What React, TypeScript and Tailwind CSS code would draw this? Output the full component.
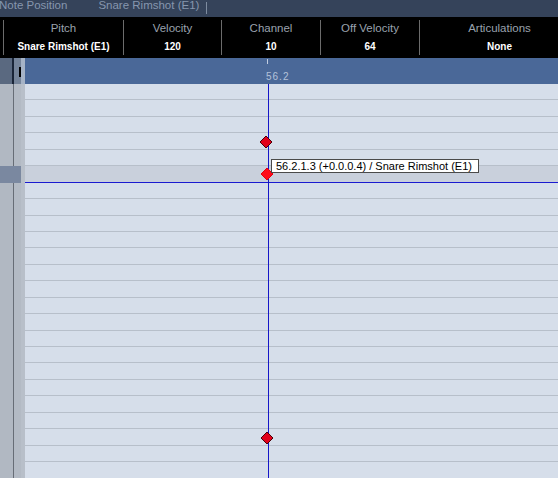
const FONT = { fontFamily: '"Liberation Sans", Arial, sans-serif' };

const COLUMNS = [
  { label: 'Pitch', value: 'Snare Rimshot (E1)', width: 'w-[120px]' },
  { label: 'Velocity', value: '120', width: 'w-[98px]' },
  { label: 'Channel', value: '10', width: 'w-[99px]' },
  { label: 'Off Velocity', value: '64', width: 'w-[99px]' },
  { label: 'Articulations', value: 'None', width: 'w-[160px]' },
];

const ROW_COUNT = 24;
const SELECTED_ROW = 5;

function Diamond({ x, y, selected }: { x: number; y: number; selected?: boolean }) {
  return (
    <svg
      width="14"
      height="14"
      viewBox="0 0 14 14"
      className="absolute"
      style={{ left: x - 7, top: y - 7 }}
    >
      <polygon
        points="7,1 13,7 7,13 1,7"
        fill={selected ? '#ff0a1a' : '#e2001a'}
        stroke={selected ? '#e00010' : '#4a0008'}
        strokeWidth="1"
      />
    </svg>
  );
}

export default function App() {
  return (
    <div className="relative w-[558px] h-[478px] overflow-hidden bg-[#d6deea]" style={FONT}>
      {/* info line */}
      <div className="h-[17px] bg-[#35435a] flex items-start text-[11.5px] leading-none text-[#8696ae]">
        <span className="ml-[-1px] mt-[-0.5px]">Note Position</span>
        <span className="ml-[31px] mt-[-0.5px]">Snare Rimshot (E1)</span>
        <span className="ml-[7px] mt-[2px] w-px h-[12px] bg-[#7e8ca0]" />
      </div>

      {/* note info bar */}
      <div className="h-[41px] bg-black flex items-start pl-[3px] pt-[3px]">
        {COLUMNS.map((c) => (
          <div
            key={c.label}
            className={`${c.width} shrink-0 h-[35px] border-l border-[#6c6c6c] flex flex-col items-center pt-px`}
          >
            <span className="text-[11.5px] leading-[14px] text-[#9aa2ae]">{c.label}</span>
            <span className="mt-[6px] text-[10px] leading-[12px] font-bold text-white">{c.value}</span>
          </div>
        ))}
      </div>

      {/* ruler */}
      <div className="h-[26px] flex">
        <div className="w-[12px] bg-[#5a6980]" />
        <div className="w-[2px] bg-[#1a2538]" />
        <div className="w-[5px] bg-[#75849a]" />
        <div className="w-[2px] bg-[#75849a] flex items-start">
          <div className="mt-[9px] w-[2px] h-[10px] bg-black" />
        </div>
        <div className="w-[4px] bg-[#a6b3c6]" />
        <div className="relative flex-1 bg-[#4a6898]">
          <div className="absolute left-[242px] top-[1px] w-px h-[5px] bg-[#c2cde0]" />
          <span className="absolute left-[241px] top-[14px] text-[10px] leading-none tracking-[1px] text-[#b4c2da]">
            56.2
          </span>
        </div>
      </div>

      {/* note grid */}
      <div className="flex flex-col">
        {Array.from({ length: ROW_COUNT }).map((_, i) => {
          const selected = i === SELECTED_ROW;
          return (
            <div key={i} className="h-[16.45px] shrink-0 flex">
              {selected ? (
                <div className="w-[21px] bg-[#7a88a0]" />
              ) : (
                <>
                  <div className="w-[13px] bg-[#b1b8c2]" />
                  <div className="w-px bg-[#676d76]" />
                  <div className="w-[7px] bg-[#b3bac4]" />
                </>
              )}
              <div className="w-[4px] bg-[#b8bfc9]" />
              <div
                className={`flex-1 border-b ${
                  selected ? 'bg-[#c9d0dc] border-[#1a1ad0]' : 'bg-[#d6deea] border-[#b7bfca]'
                }`}
              />
            </div>
          );
        })}
      </div>

      {/* cursor line */}
      <div className="absolute left-[268px] top-[84px] bottom-0 w-px bg-[#1616c8]" />

      <Diamond x={265.5} y={141.5} />
      <Diamond x={266.5} y={174} selected />
      <Diamond x={267} y={437.5} />

      {/* tooltip */}
      <div className="absolute left-[271px] top-[159px] h-[14px] w-[208px] bg-white border border-[#4a4a4a] flex items-center pl-[4px] text-[11px] leading-none text-black">
        56.2.1.3 (+0.0.0.4) / Snare Rimshot (E1)
      </div>
    </div>
  );
}
